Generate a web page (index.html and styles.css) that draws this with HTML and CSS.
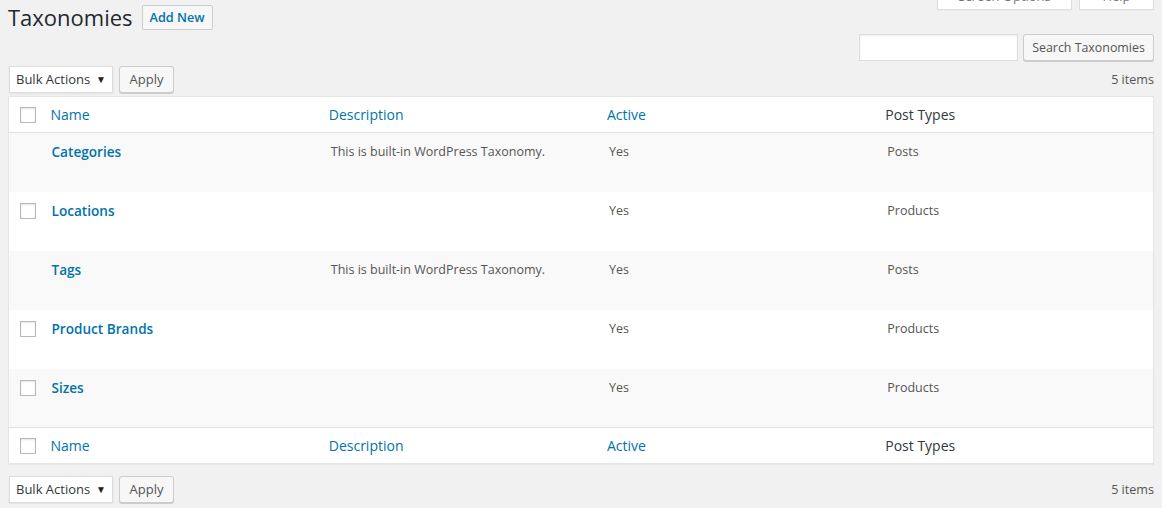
FILE: index.html
```html
<!DOCTYPE html>
<html lang="en">
<head>
<meta charset="utf-8">
<title>Taxonomies</title>
<link rel="stylesheet" href="styles.css">
</head>
<body>
<div class="screen-meta-links">
  <button class="meta-tab tab-options">Screen Options</button>
  <button class="meta-tab tab-help">Help</button>
</div>
<div class="wrap">
  <div class="title-row">
    <h1 class="page-title">Taxonomies</h1>
    <a class="page-title-action" href="#">Add New</a>
  </div>
  <div class="search-box">
    <input class="search-input" type="search">
    <button class="btn search-btn">Search Taxonomies</button>
  </div>
  <div class="tablenav top">
    <div class="bulk">
      <div class="select">Bulk Actions<span class="caret">▼</span></div>
      <button class="btn apply">Apply</button>
    </div>
    <div class="count">5 items</div>
  </div>
  <table class="list">
    <colgroup>
      <col class="c-cb"><col><col><col><col>
    </colgroup>
    <thead>
      <tr>
        <th class="cb"><span class="checkbox"></span></th>
        <th class="sortable">Name</th>
        <th class="sortable">Description</th>
        <th class="sortable">Active</th>
        <th>Post Types</th>
      </tr>
    </thead>
    <tbody>
      <tr class="alt">
        <td class="cb"></td>
        <td class="name"><a href="#">Categories</a></td>
        <td>This is built-in WordPress Taxonomy.</td>
        <td>Yes</td>
        <td>Posts</td>
      </tr>
      <tr>
        <td class="cb"><span class="checkbox"></span></td>
        <td class="name"><a href="#">Locations</a></td>
        <td></td>
        <td>Yes</td>
        <td>Products</td>
      </tr>
      <tr class="alt">
        <td class="cb"></td>
        <td class="name"><a href="#">Tags</a></td>
        <td>This is built-in WordPress Taxonomy.</td>
        <td>Yes</td>
        <td>Posts</td>
      </tr>
      <tr>
        <td class="cb"><span class="checkbox"></span></td>
        <td class="name"><a href="#">Product Brands</a></td>
        <td></td>
        <td>Yes</td>
        <td>Products</td>
      </tr>
      <tr class="alt">
        <td class="cb"><span class="checkbox"></span></td>
        <td class="name"><a href="#">Sizes</a></td>
        <td></td>
        <td>Yes</td>
        <td>Products</td>
      </tr>
    </tbody>
    <tfoot>
      <tr>
        <th class="cb"><span class="checkbox"></span></th>
        <th class="sortable">Name</th>
        <th class="sortable">Description</th>
        <th class="sortable">Active</th>
        <th>Post Types</th>
      </tr>
    </tfoot>
  </table>
  <div class="tablenav bottom">
    <div class="bulk">
      <div class="select">Bulk Actions<span class="caret">▼</span></div>
      <button class="btn apply">Apply</button>
    </div>
    <div class="count">5 items</div>
  </div>
</div>
</body>
</html>
```
FILE: styles.css
```css
* { box-sizing: border-box; }
html, body { margin: 0; padding: 0; }
body {
  background: #f1f1f1;
  font-family: "Open Sans", "Noto Sans", sans-serif;
  font-size: 13px;
  color: #444;
  position: relative;
  overflow: hidden;
}
.screen-meta-links {
  position: absolute;
  top: -18px;
  right: 8px;
  display: flex;
  gap: 7px;
}
.meta-tab {
  height: 28px;
  background: #fff;
  border: 1px solid #ddd;
  border-top: none;
  box-shadow: 0 1px 1px -1px rgba(0,0,0,.1);
  font-family: inherit;
  font-size: 13px;
  color: #72777c;
  padding: 5px 12px 0;
  line-height: 18px;
  display: flex;
  align-items: flex-start;
  justify-content: center;
  white-space: nowrap;
}
.tab-options { width: 135px; }
.tab-help { width: 75px; }
.wrap {
  padding: 0 8px 0 8px;
}
.title-row {
  display: flex;
  align-items: center;
  gap: 9px;
  padding-top: 4px;
  height: 30px;
}
.page-title {
  margin: 0;
  font-size: 22px;
  font-weight: 400;
  color: #23282d;
  line-height: 26px;
}
.page-title-action {
  display: inline-block;
  height: 25px;
  padding: 0 7px;
  border: 1px solid #ccc;
  border-radius: 2px;
  background: #f7f7f7;
  color: #0073aa;
  text-decoration: none;
  font-weight: 600;
  font-size: 12.7px;
  line-height: 23px;
}
.search-box {
  display: flex;
  justify-content: flex-end;
  gap: 5px;
  margin-top: 4px;
  height: 28px;
}
.search-input {
  width: 159px;
  height: 27px;
  border: 1px solid #ddd;
  background: #fff;
  box-shadow: inset 0 1px 2px rgba(0,0,0,.07);
  margin: 0;
}
.btn {
  font-family: inherit;
  font-size: 13px;
  color: #555;
  background: #f7f7f7;
  border: 1px solid #ccc;
  border-radius: 3px;
  box-shadow: 0 1px 0 #ccc;
  height: 27px;
  padding: 0 9px;
  line-height: 25px;
  margin: 0;
}
.search-btn { width: 131px; padding: 0; font-size: 12.4px; }
.tablenav {
  display: flex;
  justify-content: space-between;
  align-items: center;
  height: 30px;
}
.tablenav.top { margin-top: 2px; }
.tablenav.bottom { margin-top: 10px; }
.bulk {
  display: flex;
  align-items: center;
  gap: 6px;
  padding-left: 1px;
}
.select {
  width: 104px;
  height: 27px;
  background: #fff;
  border: 1px solid #ddd;
  box-shadow: 0 1px 2px rgba(0,0,0,.07);
  padding: 0 6px;
  line-height: 25px;
  font-size: 13px;
  color: #32373c;
  display: flex;
  justify-content: space-between;
}
.caret { font-size: 10px; color: #222; }
.apply { width: 55px; padding: 0; }
.count {
  color: #555;
  font-size: 12.6px;
}
.list {
  width: 100%;
  border-collapse: collapse;
  table-layout: fixed;
  background: #fff;
  border: 1px solid #e5e5e5;
  box-shadow: 0 1px 1px rgba(0,0,0,.04);
  margin-top: 2px;
}
.c-cb { width: 32px; }
.list th {
  text-align: left;
  font-weight: 400;
  font-size: 14px;
  color: #32373c;
  height: 36px;
  padding: 0 10px;
  vertical-align: middle;
}
.list th.sortable { color: #0073aa; }
.list thead th { border-bottom: 1px solid #e1e1e1; }
.list tfoot th { border-top: 1px solid #e1e1e1; height: 36px; }
.list th.cb, .list td.cb { padding: 0 0 0 11px; }
.list td.cb { vertical-align: top; padding-top: 11px; }
.checkbox {
  display: block;
  width: 16px;
  height: 16px;
  border: 1px solid #b4b9be;
  background: #fff;
  box-shadow: inset 0 1px 2px rgba(0,0,0,.1);
}
.list td {
  height: 59px;
  vertical-align: top;
  padding: 9px 12px 0 12px;
  font-size: 12.5px;
  color: #555;
  line-height: 19px;
}
.list tbody tr.alt { background: #f9f9f9; }
.list td.name { padding-left: 11px; }
.list td.name a {
  color: #0073aa;
  font-weight: 600;
  font-size: 13.6px;
  text-decoration: none;
}
```
